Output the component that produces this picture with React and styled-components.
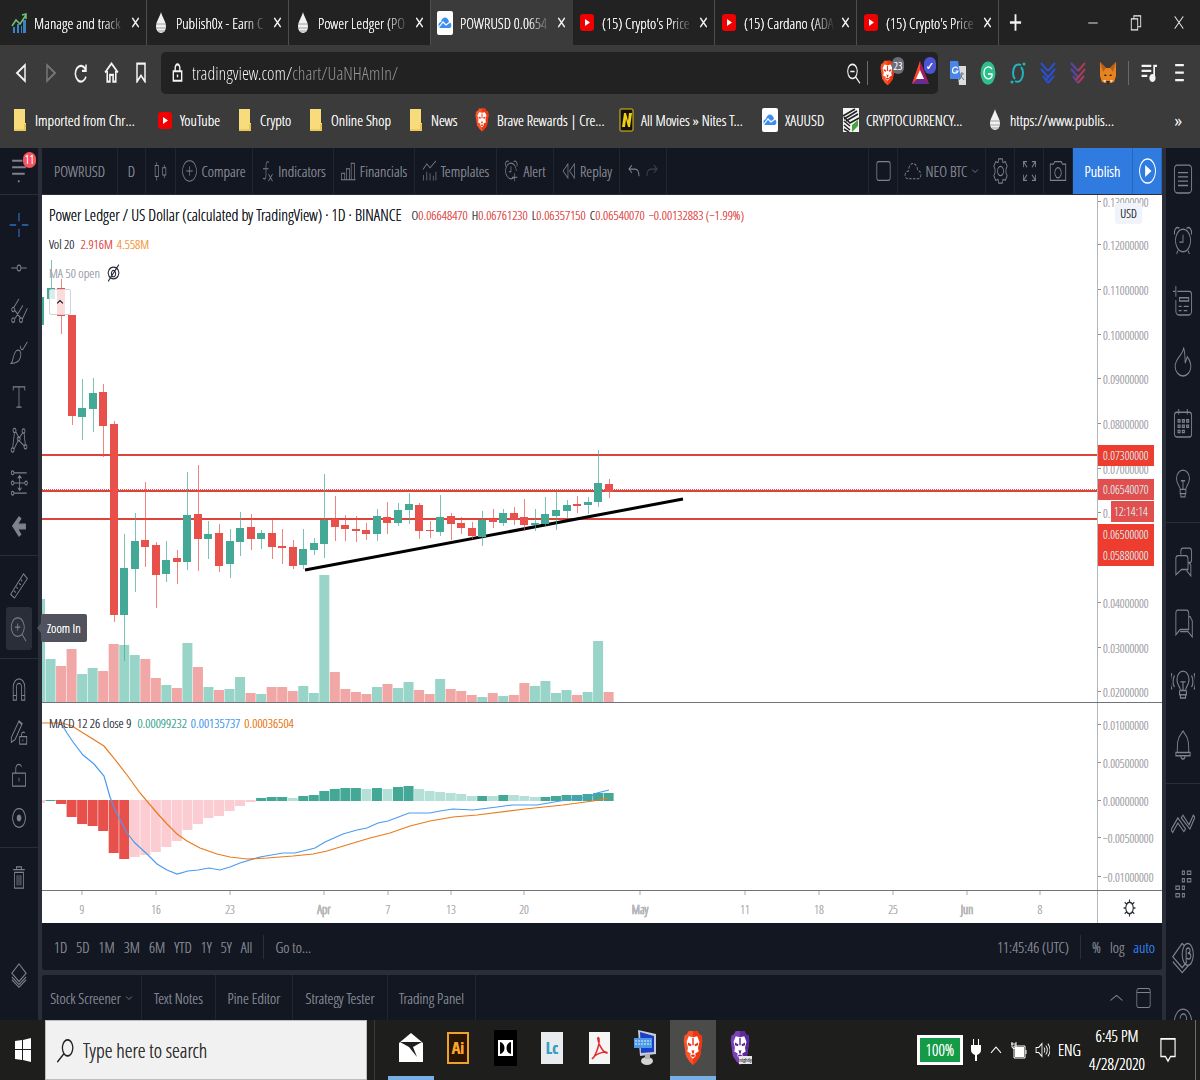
import React from 'react';
import styled, { createGlobalStyle } from 'styled-components';

const GlobalStyle = createGlobalStyle`
  * {
    box-sizing: border-box;
  }

  body {
    margin: 0;
    background: #131722;
  }

  body, button, input {
    font-family: 'Open Sans Condensed Light', 'Roboto Condensed', 'Liberation Sans Narrow', 'DejaVu Sans Condensed', 'Liberation Sans', sans-serif;
    text-shadow: 0 0 currentColor;
  }

  button {
    border: none;
    padding: 0;
    background: transparent;
    color: inherit;
    cursor: pointer;
  }

  a {
    color: inherit;
    text-decoration: none;
  }

  svg {
    display: block;
    flex: none;
  }
`;

{
  /* Icons */
}
const Glyph = ({ w = 18, h = 26, sw = 1.3, children }) => (
  <svg
    width={w}
    height={h}
    viewBox="0 0 28 28"
    preserveAspectRatio="none"
    fill="none"
    stroke="currentColor"
    strokeWidth={sw}
    aria-hidden="true"
  >
    {children}
  </svg>
);

const icons = {
  cross: <path d="M14 1v9M14 18v9M1 14h9M18 14h9" stroke="#2f6fc4" strokeWidth="1.6" />,
  hline: <path d="M2 14h9M17 14h9M14 11a3 3 0 1 0 0 6 3 3 0 0 0 0-6z" />,
  fork: (
    <path d="M6 10L14 1M7 13l10 9M8 22L20 8M19 23l8-12M5 10a2.400 2.400 0 1 0 .1 0zM5 21.500a2.400 2.400 0 1 0 .1 0zM17 21.500a2.400 2.400 0 1 0 .1 0z" />
  ),
  brush: <path d="M2 24c3-2 3-12 9-14 5-1 7 3 5 8-2 4-7 6-14 6zM16 5c0 3 2 5 4 4l7-8" />,
  text: <path d="M5 7V3h18v4M14 3v22M10 25h8" />,
  pattern: (
    <path d="M4 23L7 6M9 5l5 7 6-6M22 7l2 13M6 24l7-10 10 7M7 1.500a2.300 2.300 0 1 0 .1 0zM21 2a2.300 2.300 0 1 0 .1 0zM13.500 10.500a2.300 2.300 0 1 0 .1 0zM4 22.500a2.300 2.300 0 1 0 .1 0zM24 19a2.300 2.300 0 1 0 .1 0z" />
  ),
  forecast: (
    <path d="M6 3h20M6 25h20M6 14h17M15 6v16M12 9l3-3 3 3M12 19l3 3 3-3M4 1a2 2 0 1 0 .1 0zM4 12a2 2 0 1 0 .1 0zM25 12a2 2 0 1 0 .1 0zM4 23a2 2 0 1 0 .1 0z" />
  ),
  arrow: <path d="M4 14L14 4l3 2-5 6h12v5H12l5 6-3 2z" fill="currentColor" />,
  ruler: <path d="M1 23L21 1l6 5L7 27zM6 19l3 2M10 15l2 2M14 11l3 2M17 7l2 2" />,
  zoom: <path d="M12 2a10 10 0 1 0 .1 0zM12 8v8M8 12h8M19 20l6 7" />,
  magnet: <path d="M5 26V12a9 9 0 0 1 18 0v14h-5V12a4 4 0 0 0-8 0v14zM5 21h5M18 21h5" />,
  pencilLock: <path d="M2 20L14 2l5 3L8 22l-6 3zM14 3l4 3M15 19h11v8H15zM18 19v-3a3 3 0 0 1 5-1M20 22v2" />,
  lock: <path d="M4 12h20v14H4zM9 12V6a5 5 0 0 1 9-1M14 17v4" />,
  eye: (
    <g>
      <path d="M14 4a10 10 0 1 0 .1 0z" />
      <path d="M14 11a3 3 0 1 0 .1 0z" fill="currentColor" />
    </g>
  ),
  trash: <path d="M5 5h18M10 5V2h8v3M7 8h14v17H7zM11 11v11M14 11v11M17 11v11" />,
  layers: <path d="M14 1l10 10-10 9L4 11zM4 15l10 8 10-8M4 18l10 8 10-8" />,
  list: <path d="M6 1h16a4 4 0 0 1 4 4v18a4 4 0 0 1-4 4H6a4 4 0 0 1-4-4V5a4 4 0 0 1 4-4zM7 8h14M7 12h14M7 16h14M7 20h14" />,
  clock: <path d="M14 4a10.500 10.500 0 1 0 .1 0zM14 9v7H9M2 9c-1-5 3-8 7-6M26 9c1-5-3-8-7-6M7 24l-2 3M21 24l2 3" />,
  news: <path d="M4 0v10M0 5h3M6 5h17a3 3 0 0 1 3 3v15a4 4 0 0 1-4 4H8a4 4 0 0 1-4-4V13M9 11h13v3H9zM8 19h4M15 19h7M8 23h4M15 23h5" />,
  fire: <path d="M15 1C13 8 3 11 3 18c0 5 5 9 11 9s11-4 11-9c0-4-2-6-5-9l-3 6c0-6 0-9-2-14z" />,
  calendar: (
    <path d="M5 4h18a3 3 0 0 1 3 3v17a3 3 0 0 1-3 3H5a3 3 0 0 1-3-3V7a3 3 0 0 1 3-3zM8 1v5M20 1v5M7 11h3v2H7zM13 11h3v2h-3zM19 11h3v2h-3zM7 16h3v2H7zM13 16h3v2h-3zM19 16h3v2h-3zM7 21h3v2H7zM13 21h3v2h-3z" />
  ),
  bulb: <path d="M10 19c0-3-5-5-5-10a9 8 0 0 1 18 0c0 5-5 7-5 10zM10 19v4h8v-4M11 23v3h6v-3M11 11h6M14 11v8" />,
  chats: <path d="M7 8h11a3 3 0 0 1 3 3v10h-9l-8 5V11a3 3 0 0 1 3-3zM11 7V4a3 3 0 0 1 3-3h9a3 3 0 0 1 3 3v8c0 3-2 3-4 3M22 14l3 3v10l-6-5" />,
  chat: <path d="M6 2h13a3 3 0 0 1 3 3v15h-12l-6 5V5a3 3 0 0 1 2-3zM22 8h2l3 4v15l-6-5H10" />,
  bulbLive: (
    <path d="M11 20c0-3-4-5-4-10a7 8 0 0 1 14 0c0 5-4 7-4 10zM10 20v4h8v-4M11 24v3h6v-3M11 12h6M14 12v8M4 6c-2 4-2 8 0 11M1 4c-2 5-2 11 0 15M24 6c2 4 2 8 0 11M27 4c2 5 2 11 0 15" />
  ),
  bell: <path d="M4 21h20v3H4zM6 21c0-8 0-13 5-17l3-3 3 3c5 4 5 9 5 17M11 24a3 3 0 0 0 6 0" />,
  order: <path d="M0 22l8-14 9 13-2 3-7-10-6 11zM12 8l2-3 7 11 5-11 2 2-6 14z" />,
  dots: (
    <path d="M13 2h3v3h-3zM20 2h5v3h-5zM13 9h3v3h-3zM20 9h5v3h-5zM4 16h5v3H4zM13 16h3v3h-3zM4 23h5v3H4zM13 23h3v3h-3z" />
  ),
  beta: (
    <g>
      <path d="M13 2L1 13l12 9 6-5M1 17l12 9 8-6M13 2l3 2" />
      <path d="M20 2a7 9 0 1 0 .1 0zM18 17V8c0-3 5-3 5 0 0 2-3 2-3 2s4 0 4 2.500-4 3-5 1.500" />
    </g>
  ),
  help: <path d="M14 2a12 12 0 1 0 .1 0zM10 11c0-6 9-6 9 0 0 3-5 3-5 6" />,
  candles: <path d="M4 7h6v14H4zM7 3v4M7 21v5M18 10h6v9h-6zM21 6v4M21 19v4" />,
  compare: <path d="M14 1a13 13 0 1 0 .1 0zM14 8v12M8 14h12" />,
  fx: <path d="M18 3c-4-2-6 0-6 4v13c0 4-3 5-6 3M6 11h11M17 18l8 9M25 18l-8 9" />,
  bars: <path d="M1 25v-8h6v8zM10 25V11h6v14zM19 25V4h6v21zM0 25h27" />,
  template: <path d="M2 12l7-7 6 5 11-9M3 26v-7M9 26V15M15 26v-9M21 26v-6M26 26V15" />,
  alert: <path d="M19 22a10 10 0 1 1 4-8M13 8v7H9M3 8c-2-4 2-8 6-6M24 8c2-4-2-8-6-6M20 17v10M15 22h10" />,
  replay: <path d="M13 5L4 14l9 9zM25 5l-9 9 9 9z" />,
  undo: <path d="M10 5l-6 6 6 6M4 11h12c6 0 8 4 8 11" />,
  redo: <path d="M18 5l6 6-6 6M24 11H12c-6 0-8 4-8 11" />,
  square: <path d="M6 3h16a3 3 0 0 1 3 3v16a3 3 0 0 1-3 3H6a3 3 0 0 1-3-3V6a3 3 0 0 1 3-3z" />,
  cloud: <path d="M6 24c-6-1-6-9 1-10C7 2 20 1 21 13c7 1 7 10 1 11z" strokeDasharray="4 2" />,
  gear: (
    <path d="M14 9a5 5 0 1 0 .1 0zM11 1h6l1 4 4-1 3 5-2 3v4l2 3-3 5-4-1-1 4h-6l-1-4-4 1-3-5 2-3v-4L3 9l3-5 4 1z" />
  ),
  expand: <path d="M4 10V4h6M4 4l6 6M24 10V4h-6M24 4l-6 6M4 18v6h6M4 24l6-6M24 18v6h-6M24 24l-6-6" />,
  camera: <path d="M2 6h5l2-3h10l2 3h5v19H2zM14 10a5 6 0 1 0 .1 0z" />,
  play: (
    <g>
      <path d="M14 1a13 13 0 1 0 .1 0z" />
      <path d="M11 9l8 5-8 5z" fill="currentColor" />
    </g>
  ),
  chevronDown: <path d="M4 9l10 10L24 9" />,
  chevronUp: <path d="M4 19L14 9l10 10" />,
  panel: <path d="M6 2h16a3 3 0 0 1 3 3v18a3 3 0 0 1-3 3H6a3 3 0 0 1-3-3V5a3 3 0 0 1 3-3zM3 7h22" />,
  sun: <path d="M14 6a7 8 0 1 0 .1 0zM14 2v4M14 22v4M5 6l4 3M23 6l-4 3M5 22l4-3M23 22l-4-3M3 14h4M21 14h4" />,
  back: <path d="M22 3v22L6 14z" />,
  forward: <path d="M6 3v22l16-11z" />,
  reload: <path d="M23 9A11 11 0 1 0 24 19M24 2v9h-8" />,
  home: <path d="M2 14L14 2l12 12M6 12v14h5v-9h6v9h5V12" />,
  bookmark: <path d="M6 2h16v24l-8-8-8 8z" />,
  padlock: <path d="M5 12h18v14H5zM9 12V7a5 5 0 0 1 10 0v5M14 17v4" />,
  zoomOut: <path d="M12 3a9 9 0 1 0 .1 0zM8 12h8M18 19l8 8" />,
  close: <path d="M4 4l20 20M24 4L4 24" />,
  plus: <path d="M14 2v24M2 14h24" />,
  minimize: <path d="M3 14h22" />,
  restore: <path d="M3 8h15v18H3zM9 8V3h16v18h-7" />,
  playlist: (
    <g>
      <path d="M1 4h17M1 11h17M1 18h10M23 20V4h5" />
      <path d="M20 17a4 4 0 1 0 .1 0z" fill="currentColor" />
    </g>
  ),
  menu: <path d="M3 4h22M3 14h22M3 24h22" />,
  menuShort: <path d="M2 3h18M2 10h24M2 17h22M12 25h3" />,
  hidden: <path d="M14 5a10 9 0 1 0 .1 0zM14 10a4 5 0 1 0 .1 0zM24 1L4 27" />,
  search: <path d="M18 2a8 9 0 1 0 .1 0zM13 17L2 27" />,
  speaker: <path d="M2 10h5l6-6v20l-6-6H2zM17 10c2 3 2 5 0 8M20 7c4 4 4 10 0 14M24 4c5 6 5 14 0 20" />,
  note: <path d="M3 2h22v19h-7l-4 5-4-5H3z" />
};

const I = ({ name, ...rest }) => <Glyph {...rest}>{icons[name]}</Glyph>;

const Chart3 = () => (
  <svg width="16" height="22" viewBox="0 0 16 22">
    <path d="M2 15h2v6H2zM6 12h2v9H6zM10 14h1v7h-1zM12 8h3v13h-3z" fill="#3d83c4" />
    <path d="M1 14l4-6 4 4 6-9M11 3l4-1v5" fill="none" stroke="#6fc276" strokeWidth="1.500" />
  </svg>
);

const Drop = () => (
  <svg width="12" height="22" viewBox="0 0 12 22">
    <path d="M6 0c1 5 5 9 5 15a5 6 0 0 1-10 0C1 9 5 5 6 0z" fill="#f1f1f1" />
    <path d="M1 12h10M1 16h10M3 19h7" stroke="#9aa0a6" />
  </svg>
);

const Cloud = () => (
  <svg width="16" height="24" viewBox="0 0 16 24">
    <rect width="16" height="24" rx="2" fill="#fff" />
    <path d="M3 17c-3-2-1-6 1-6 1-6 7-6 8 0 3 1 3 5 1 6z" fill="#3d8ef0" />
    <path d="M2 16l4-5 3 3 4-3" fill="none" stroke="#fff" strokeWidth="1.200" />
  </svg>
);

const Tube = () => (
  <svg width="14" height="17" viewBox="0 0 14 17">
    <rect width="14" height="17" rx="3" fill="#f00000" />
    <path d="M5 5l5 3.500L5 12z" fill="#fff" />
  </svg>
);

const Folder = () => (
  <svg width="12" height="22" viewBox="0 0 12 22">
    <path d="M0 0h11v14h1v8H0z" fill="#f8dc7c" />
    <path d="M0 21h12" stroke="#e0b83e" />
    <path d="M10 15h2v6h-2z" fill="#e9c34e" />
  </svg>
);

const Lion = ({ w = 14, h = 24, from = '#fb542b', to = '#f0360f' }) => (
  <svg width={w} height={h} viewBox="0 0 28 40" preserveAspectRatio="none">
    <path d="M8 1h12l3 4 3 1 1 6-3 17-5 6-5 4-5-4-5-6L1 12l1-6 3-1z" fill={from} />
    <path d="M14 1h6l3 4 3 1 1 6-3 17-5 6-5 4z" fill={to} />
    <path
      d="M8 7l6 1 6-1 3 6-2 7 1 4-5 2 1 3-4 3-4-3 1-3-5-2 1-4-2-7z"
      fill="#fff"
    />
    <path d="M7 14l5 2-1 2-4-1zM21 14l-5 2 1 2 4-1zM12 22l2 1 2-1-1 4h-2zM10 29l4-2 4 2-4 1zM13 9h2v8h-2z" fill={to} />
  </svg>
);

const Nites = () => (
  <svg width="15" height="24" viewBox="0 0 15 24">
    <rect x="1" y="1" width="13" height="22" rx="1" fill="#111" stroke="#e8c40c" />
    <path d="M3 19L5 5h2l2 8 1-8h3l-2 14H9l-2-8-1 8z" fill="#f2cf10" />
  </svg>
);

const Coin = () => (
  <svg width="16" height="24" viewBox="0 0 16 24">
    <rect width="16" height="24" fill="#f4f4f4" />
    <path d="M0 8L12 1M1 11L14 3M3 13l12-7M1 9l6 6 9-5M1 13l6 5M1 17l6 5M1 21l5 3" fill="none" stroke="#222" strokeWidth="1.600" />
    <path d="M9 17l6-5v6l-6 6z" fill="#4aa043" />
  </svg>
);

const Bat = () => (
  <svg width="17" height="23" viewBox="0 0 17 23">
    <path d="M8 0l9 23H0z" fill="#662d91" />
    <path d="M8 0L0 23l8-8z" fill="#ff4724" />
    <path d="M8 0l9 23-9-8z" fill="#9e1f63" />
    <path d="M8 9l4 9H4z" fill="#fff" />
  </svg>
);

const Translate = () => (
  <svg width="16" height="24" viewBox="0 0 16 24">
    <path d="M7 5h9v19H9z" fill="#dcdcdc" />
    <path d="M9 13h5M12 11c0 4-1 6-3 8M10 14l4 5" stroke="#777" fill="none" />
    <path d="M0 0h8l3 18H0z" fill="#4a86e8" />
    <path d="M8 7.500C6 5 2.500 6 2.500 9.500S7 13 8 10H5.500" stroke="#fff" strokeWidth="1.200" fill="none" />
  </svg>
);

const Grammar = () => (
  <svg width="16" height="24" viewBox="0 0 16 24">
    <ellipse cx="8" cy="12" rx="7.500" ry="11.500" fill="#2fbf8d" />
    <path d="M12 8C9 4 4 6 4 12s6 8 8 3v-2H8" stroke="#fff" strokeWidth="1.300" fill="none" />
  </svg>
);

const Icx = () => (
  <svg width="16" height="24" viewBox="0 0 16 24">
    <path d="M11 4C6 2 3 6 3 12c0 3 1 5 2 6M5 20c5 3 8-3 8-8 0-3-1-5-2-6" stroke="#22b5bb" strokeWidth="2" fill="none" />
    <circle cx="2" cy="21" r="1.500" fill="#22b5bb" />
    <circle cx="14" cy="3" r="1.500" fill="#22b5bb" />
  </svg>
);

const Stripes = ({ color, color2 }) => (
  <svg width="16" height="22" viewBox="0 0 16 22">
    <path d="M1 1l7 8M1 7l7 8M3 14l5 7" stroke={color} strokeWidth="2" />
    <path d="M15 1L8 9M15 7l-9 11M14 14l-6 7" stroke={color2} strokeWidth="2" />
  </svg>
);

const Fox = () => (
  <svg width="16" height="24" viewBox="0 0 16 24">
    <path d="M0 1l6 6h4l6-6v14l-2 6-4 1H6l-4-1-2-6z" fill="#e8821e" />
    <path d="M0 1l6 6-3 4zM16 1l-6 6 3 4z" fill="#b8611a" />
    <path d="M5 13l2 2H4zM11 13l-2 2h3zM6 20h4l-1 3H7z" fill="#2a2a2a" />
    <path d="M3 19h3l-1 3zM13 19h-3l1 3z" fill="#f2d9b8" />
  </svg>
);

const WinLogo = () => (
  <svg width="16" height="24" viewBox="0 0 16 24">
    <path d="M0 3l7-1v9H0zM8 2l8-2v11H8zM0 12h7v10l-7-1zM8 12h8v12l-8-2z" fill="#fff" />
  </svg>
);

const Mail = () => (
  <svg width="24" height="30" viewBox="0 0 24 30">
    <path d="M0 10L12 0l12 10v19H0z" fill="#fff" />
    <path d="M1 9h22l-9 5 4 10-8-10z" fill="#1e1e1c" />
  </svg>
);

const Dolby = () => (
  <svg width="23" height="36" viewBox="0 0 23 36">
    <rect width="23" height="36" fill="#000" />
    <path d="M4 10h15v16H4z" fill="#fff" />
    <path d="M6 12c6 1 6 11 0 12zM17 12c-6 1-6 11 0 12z" fill="#000" />
  </svg>
);

const Acrobat = () => (
  <svg width="21" height="32" viewBox="0 0 21 32">
    <rect width="21" height="32" fill="#f5f5f5" />
    <path d="M3 27c3-2 8-14 7-20 0-2-2-2-1 1 1 6 6 13 9 13 1-2-10-1-15 6z" stroke="#df2b2b" strokeWidth="1.500" fill="none" />
  </svg>
);

const Monitor = () => (
  <svg width="24" height="36" viewBox="0 0 24 36">
    <path d="M4 0l18 4v20L6 26z" fill="#c8ccd6" />
    <path d="M6 2l14 4v16L7 23z" fill="#1c3fc9" />
    <path d="M0 8h18v10H0z" fill="#4d9be6" />
    <path d="M1 11h16M1 14h16" stroke="#e4f0ff" strokeDasharray="2 1" />
    <ellipse cx="13" cy="31" rx="6" ry="4" fill="#d5d5d5" />
    <path d="M11 24h5v5h-5z" fill="#b5b5b5" />
  </svg>
);

const Plug = () => (
  <svg width="10" height="22" viewBox="0 0 10 22">
    <path d="M2 0h1v6h4V0h1v6h2v5c0 3-2 4-4 5v6H4v-6c-2-1-4-2-4-5V6h2z" fill="#fff" />
  </svg>
);

const Power = () => (
  <svg width="16" height="17" viewBox="0 0 16 17">
    <path d="M4 5h9v10H4z" fill="#fff" />
    <path d="M3 4h11v12H3zM15 8v4M0 2h5M1 0v5c0 2 4 2 4 0V0" fill="none" stroke="#fff" />
  </svg>
);

{
  /* Browser frame */
}
const Page = styled.div`
  display: flex;
  flex-direction: column;
  min-height: 100vh;
`;

const TabStrip = styled.div`
  display: flex;
  align-items: stretch;
  height: 45px;
  padding-left: 5px;
  background: #222222;
  color: #f2f2f2;
`;

const Tab = styled.div`
  display: flex;
  align-items: center;
  flex: 0 1 142px;
  min-width: 0;
  padding: 0 6px 0 5px;
  border-right: 1px solid ${props => (props.$active ? '#3b3b3b' : '#4e4e4e')};
  background: ${props => (props.$active ? '#3b3b3b' : 'transparent')};
`;

const TabLink = styled.a`
  display: flex;
  align-items: center;
  gap: 6px;
  flex: 1;
  min-width: 0;
`;

const Favicon = styled.span`
  display: flex;
  justify-content: center;
  width: 18px;
  flex: none;
`;

const TabTitle = styled.span`
  flex: 1;
  min-width: 0;
  overflow: hidden;
  white-space: nowrap;
  font-size: 15px;
  line-height: 24px;
  mask-image: linear-gradient(90deg, #000 75%, transparent 100%);
`;

const TabClose = styled.button`
  margin-left: 6px;
`;

const NewTab = styled.button`
  width: 32px;
  display: flex;
  align-items: center;
  justify-content: center;
`;

const WindowButtons = styled.div`
  display: flex;
  align-items: center;
  margin-left: auto;

  button {
    width: 43px;
    display: flex;
    justify-content: center;
  }
`;

const NavRow = styled.div`
  display: flex;
  align-items: center;
  height: 55px;
  padding: 0 6px;
  background: #3b3b3b;
  color: #f4f4f4;
`;

const NavButton = styled.button`
  width: 30px;
  display: flex;
  justify-content: center;
  color: ${props => (props.$dim ? '#777777' : '#f4f4f4')};
`;

const AddressBar = styled.div`
  display: flex;
  align-items: center;
  flex: 1;
  height: 42px;
  margin-left: 5px;
  padding: 0 0 0 10px;
  border-radius: 5px;
  background: #222222;
`;

const AddressInput = styled.input`
  flex: 1;
  min-width: 0;
  margin-left: 8px;
  padding: 0;
  border: none;
  outline: none;
  font-size: 18px;
  line-height: 24px;
  color: transparent;
  background: linear-gradient(90deg, #ffffff ${props => props.$host}px, #9a9a9a ${props => props.$host}px);
  background-clip: text;
  -webkit-background-clip: text;
`;

const Divider = styled.span`
  width: 1px;
  height: ${props => props.$h || 24}px;
  margin: 0 ${props => props.$m}px;
  background: ${props => props.$color || '#6a6a6a'};
`;

const BadgeButton = styled.button`
  position: relative;
  width: 32px;
  height: 32px;
  display: flex;
  align-items: center;
  padding-left: 6px;
`;

const Badge = styled.span`
  position: absolute;
  top: 0;
  right: 2px;
  width: 12px;
  height: 17px;
  border-radius: 6px;
  background: ${props => props.$color};
  color: #ffffff;
  font-size: 11px;
  line-height: 17px;
  text-align: center;
`;

const Extensions = styled.div`
  display: flex;
  align-items: center;
  margin-left: 5px;

  button {
    width: 30px;
    display: flex;
    justify-content: center;
  }
`;

const Bookmarks = styled.nav`
  display: flex;
  align-items: center;
  height: 48px;
  padding: 0 18px 8px 11px;
  background: #3b3b3b;
  color: #f4f4f4;
  font-size: 15px;
  line-height: 24px;
  white-space: nowrap;
`;

const BookmarkLink = styled.a`
  display: flex;
  align-items: center;
  gap: 6px;
  flex: 0 0 ${props => props.$w}px;
`;

const MoreButton = styled.button`
  margin-left: auto;
  font-size: 18px;
`;

{
  /* Chart application */
}
const Workspace = styled.div`
  display: flex;
  flex: 1;
  gap: 4px;
  background: #2a2e39;
  color: #7f828d;
`;

const SideBar = styled.aside`
  display: flex;
  flex-direction: column;
  flex: 0 0 ${props => props.$w}px;
  background: #131722;
`;

const MenuButton = styled.button`
  position: relative;
  display: flex;
  align-items: center;
  justify-content: center;
  height: 47px;
  border-bottom: 1px solid #2a2e39;
`;

const Notice = styled.span`
  position: absolute;
  top: 4px;
  right: 2px;
  width: 13px;
  height: 16px;
  border-radius: 7px;
  background: #f7525f;
  color: #ffffff;
  font-size: 12px;
  line-height: 16px;
`;

const ToolGroup = styled.div`
  display: flex;
  flex-direction: column;
  padding: ${props => (props.$first ? 0 : 8)}px 0 8px;
  border-bottom: ${props => (props.$last ? 'none' : '1px solid #2a2e39')};
`;

const ToolButton = styled.button`
  position: relative;
  display: flex;
  align-items: center;
  justify-content: center;
  flex: 0 0 ${props => props.$h || 43}px;
  margin: 0 6px;
  border-radius: 3px;
  background: ${props => (props.$active ? '#2a2e39' : 'transparent')};
`;

const Spacer = styled.div`
  flex: ${props => (props.$h ? `0 0 ${props.$h}px` : 1)};
`;

const Tooltip = styled.span`
  position: absolute;
  left: 35px;
  top: 7px;
  z-index: 3;
  padding: 0 6px;
  border-radius: 2px;
  background: #50535e;
  color: #ffffff;
  font-size: 13px;
  line-height: 28px;
  white-space: nowrap;

  &:before {
    content: '';
    position: absolute;
    left: -4px;
    top: 9px;
    border-style: solid;
    border-width: 5px 4px 5px 0;
    border-color: transparent #50535e;
  }
`;

const RightBar = styled(SideBar)`
  contain: size;
  overflow: hidden;

  ${ToolButton} {
    margin: 0;
  }
`;

const Center = styled.main`
  display: flex;
  flex-direction: column;
  flex: 1;
  min-width: 0;
`;

const Toolbar = styled.div`
  display: flex;
  height: 47px;
  background: #131722;
  border-bottom: 1px solid #2a2e39;
`;

const BarButton = styled.button`
  display: flex;
  align-items: center;
  justify-content: center;
  gap: 4px;
  flex: 0 0 ${props => props.$w}px;
  border-right: 1px solid #22262f;
  border-left: ${props => (props.$first ? '1px solid #22262f' : 'none')};
  font-size: 15px;
  white-space: nowrap;
`;

const Publish = styled(BarButton)`
  background: #2f7be0;
  color: #ffffff;
  border-right: 1px solid #2566bf;
`;

const Dim = styled.span`
  opacity: 0.4;
`;

const ChartGrid = styled.section`
  position: relative;
  display: grid;
  grid-template-columns: 1fr 65px;
  flex: 1;
  background: #ffffff;
`;

const Legend = styled.div`
  position: absolute;
  left: 7px;
  top: 7px;
  display: flex;
  flex-direction: column;
  align-items: flex-start;
  gap: 4px;
  color: #2a2e39;
`;

const LegendRow = styled.div`
  display: flex;
  align-items: center;
  gap: 6px;
  height: 25px;
  font-size: 13px;
  white-space: nowrap;
  color: ${props => (props.$muted ? '#a3a6af' : '#3a3e49')};
`;

const Symbol = styled.span`
  margin-right: 4px;
  font-size: 16px;
  color: #131722;
`;

const Value = styled.span`
  color: ${props => props.$color};
`;

const Values = styled.span`
  display: flex;
  gap: 4px;
`;

const Collapse = styled.button`
  display: flex;
  align-items: center;
  justify-content: center;
  width: 22px;
  height: 26px;
  border: 1px solid #d0d3da;
  border-radius: 2px;
  background: rgba(255, 255, 255, 0.8);
  color: #131722;
`;

const MacdLegend = styled(LegendRow)`
  position: absolute;
  left: 7px;
  top: 515px;
`;

const Currency = styled.button`
  position: absolute;
  right: 20px;
  top: 8px;
  width: 27px;
  border-radius: 3px;
  background: #f0f3fa;
  color: #2a2e39;
  font-size: 12px;
  line-height: 21px;
`;

const AxisSettings = styled.button`
  position: absolute;
  right: 25px;
  bottom: 5px;
  color: #2a2e39;
`;

const RangeBar = styled.div`
  display: flex;
  align-items: center;
  gap: 9px;
  height: 47px;
  padding: 0 7px 0 12px;
  background: #131722;
  border-radius: 0 0 3px 3px;
  font-size: 15px;

  button {
    font-size: 15px;
  }
`;

const Push = styled.span`
  margin-left: auto;
`;

const Auto = styled.button`
  color: #2f7be0;
`;

const WidgetBar = styled.div`
  display: flex;
  height: 45px;
  margin-top: 5px;
  background: #131722;
  border-radius: 3px 3px 0 0;
`;

const WidgetTools = styled.div`
  display: flex;
  align-items: center;
  gap: 10px;
  margin-left: auto;
  padding-right: 10px;
`;

{
  /* Windows taskbar */
}
const Taskbar = styled.footer`
  display: flex;
  height: 60px;
  background: #1e1e1c;
  color: #ffffff;
`;

const StartButton = styled.button`
  width: 45px;
  display: flex;
  align-items: center;
  justify-content: center;
`;

const SearchBox = styled.label`
  display: flex;
  align-items: center;
  gap: 7px;
  flex: 0 1 322px;
  padding: 0 10px;
  background: #f1f1f1;
  border: 1px solid #bdbdbd;
  color: #222222;
`;

const SearchInput = styled.input`
  flex: 1;
  min-width: 0;
  border: none;
  outline: none;
  background: transparent;
  font-size: 20px;

  &::placeholder {
    color: #333333;
    opacity: 1;
  }
`;

const Apps = styled.div`
  display: flex;
  align-items: stretch;
  margin-left: 7px;
  padding-left: 13px;
  gap: 1px;
  border-left: 1px solid #3a3a38;
`;

const AppButton = styled.button`
  display: flex;
  align-items: center;
  justify-content: center;
  width: 46px;
  border-bottom: 4px solid ${props => (props.$open ? '#76b0e6' : 'transparent')};
  background: ${props => (props.$active ? '#4b4b4a' : 'transparent')};
`;

const AppTile = styled.span`
  width: 22px;
  height: 32px;
  border: 2px solid ${props => props.$edge};
  background: ${props => props.$bg};
  color: ${props => props.$color};
  font-family: 'Open Sans Condensed', 'Roboto Condensed', sans-serif;
  font-size: 16px;
  font-weight: bold;
  line-height: 28px;
  text-align: center;
`;

const Nightly = styled.span`
  position: relative;
`;

const NightlyTag = styled.span`
  position: absolute;
  right: -2px;
  bottom: 2px;
  background: #e6e6e6;
  color: #222222;
  font-size: 6px;
  line-height: 8px;
`;

const Tray = styled.div`
  display: flex;
  align-items: center;
  gap: 8px;
  margin-left: auto;
  padding-right: 4px;
  font-size: 16px;
`;

const Battery = styled.span`
  width: 46px;
  border: 3px solid #ffffff;
  background: #159a48;
  line-height: 24px;
  text-align: center;
`;

const Clock = styled.time`
  width: 56px;
  text-align: center;
  line-height: 28px;
`;

const ActionButton = styled.button`
  padding: 0 18px 0 6px;
  border-right: 1px solid #6d6d6d;
  height: 60px;
`;

{
  /* high, body top, body bottom, low, rising, volume */
}
const candles = [
  [102, 102, 130, 130, 1, 103], [65, 93, 104, 104, 1, 43], [84, 93, 121, 139, 0, 36], [120, 120, 221, 230, 0, 53],
  [184, 213, 222, 245, 1, 28], [183, 198, 214, 237, 1, 34], [189, 197, 231, 262, 0, 31], [226, 229, 420, 427, 0, 58],
  [339, 373, 420, 466, 1, 57], [318, 346, 374, 397, 1, 47], [287, 345, 352, 372, 0, 43], [347, 350, 380, 413, 0, 24],
  [346, 365, 379, 387, 1, 17], [355, 363, 367, 389, 0, 14], [277, 320, 367, 375, 1, 59], [270, 319, 344, 376, 0, 35],
  [326, 339, 344, 364, 1, 15], [329, 338, 371, 377, 0, 12], [334, 346, 369, 383, 1, 13], [317, 333, 347, 361, 1, 25],
  [319, 332, 344, 355, 0, 9], [335, 338, 344, 354, 1, 8], [324, 338, 352, 364, 0, 15], [334, 351, 353, 369, 0, 15],
  [345, 352, 371, 374, 0, 11], [334, 354, 370, 374, 1, 16], [343, 348, 355, 360, 1, 9], [279, 325, 349, 363, 1, 127],
  [301, 324, 332, 346, 0, 30], [320, 330, 334, 346, 0, 13], [321, 334, 336, 347, 0, 10], [328, 335, 339, 345, 0, 8],
  [314, 321, 339, 346, 1, 15], [307, 322, 328, 339, 0, 18], [308, 315, 328, 331, 1, 14], [298, 309, 315, 329, 1, 20],
  [308, 310, 336, 344, 0, 12], [326, 335, 336, 343, 0, 8], [300, 322, 337, 341, 1, 23], [318, 321, 329, 345, 0, 13],
  [322, 328, 333, 339, 0, 11], [327, 333, 341, 344, 0, 7], [316, 325, 342, 351, 1, 5], [314, 324, 327, 333, 0, 9],
  [314, 318, 328, 331, 1, 6], [312, 318, 325, 330, 0, 7], [304, 322, 330, 336, 0, 19], [314, 328, 330, 336, 1, 16],
  [302, 319, 329, 332, 1, 21], [297, 315, 321, 335, 1, 9], [305, 310, 316, 323, 1, 12], [301, 309, 311, 318, 0, 7],
  [302, 307, 310, 319, 1, 10], [255, 288, 307, 312, 1, 61], [284, 289, 297, 303, 0, 10]
];

const histogram = [
  -3, 1, -4, -17, -24, -26, -31, -53, -59, -57, -55, -52, -47, -41, -30, -24, -18, -16, -11, -6, -2,
  3, 4, 4, 3, 5, 6, 10, 12, 13, 13, 12, 13, 12, 14, 15, 12, 10, 9, 8, 7, 5, 5, 5, 6, 6, 5, 4, 4, 5, 6, 6, 7, 8, 8
];
const fading = [0, 24, 31, 33, 36, 37, 38, 39, 40, 41, 43, 45, 46, 47];

const signalLine =
  '0,528 20,528 30,531 46,541 62,551 71,562 85,580 98,598 115,618 125,629 135,639 145,646 158,653 175,659 188,662 205,664 225,663 251,661 271,659 285,656 308,649 328,643 348,638 368,631 388,626 411,622 435,620 483,614 521,610 551,606 567,603';
const macdLine =
  '20,530 25,538 31,547 41,560 52,569 62,581 68,602 73,615 85,638 93,648 105,659 115,669 125,675 135,679 146,676 156,675 167,673 178,675 188,672 198,668 218,662 241,658 253,658 261,656 273,653 283,647 301,639 315,635 325,633 336,628 346,626 367,618 388,618 398,616 411,614 431,615 455,612 470,610 495,610 518,606 531,604 548,602 555,598 567,595';

const dates = [
  ['9', 40], ['16', 114], ['23', 188], ['Apr', 282], ['7', 346], ['13', 409], ['20', 482], ['May', 598],
  ['11', 703], ['18', 777], ['25', 851], ['Jun', 925], ['8', 998]
];

const prices = [
  ['0.13000000', 7], ['0.12000000', 50], ['0.11000000', 95], ['0.10000000', 140], ['0.09000000', 184],
  ['0.08000000', 229], ['0.07000000', 274], ['0.', 318], ['0.04000000', 408], ['0.03000000', 453],
  ['0.02000000', 497], ['0.01000000', 530], ['0.00500000', 568], ['0.00000000', 606], ['−0.00500000', 643],
  ['−0.01000000', 682]
];

const tags = [
  ['0.07300000', 250, 1, 56, '#ee3d2f'],
  ['0.06540070', 284, 1, 56, '#e1504f'],
  ['12:14:14', 306, 14, 43, '#e1504f'],
  ['0.06500000', 329, 1, 56, '#ee3d2f'],
  ['0.05880000', 350, 1, 56, '#ee3d2f']
];

const STEP = 10.53;
const VOLUME_BASE = 507;
const ZERO = 605;
const barX = i => i * STEP - 2;

const histColor = i => {
  if (histogram[i] > 0) return fading.includes(i) ? '#b4e0d7' : '#43a895';
  return i > 8 || fading.includes(i) ? '#fbcdd2' : '#e8504c';
};

function Plot() {
  return (
    <svg width="100%" height="728" role="img" aria-label="POWRUSD chart">
      {[260, 296, 324].map(y => (
        <line key={y} x1="0" x2="100%" y1={y} y2={y} stroke="#dd4338" strokeWidth="2" />
      ))}
      <line x1="0" x2="100%" y1="294.500" y2="294.500" stroke="#e1504f" strokeDasharray="1 1" />
      <line x1="263" y1="375" x2="641" y2="304" stroke="#000000" strokeWidth="3" />
      {candles.map(([high, top, bottom, low, up, volume], i) => (
        <g key={i} fill={up ? '#43a895' : '#e8504c'}>
          <rect x={barX(i) - 5} y={VOLUME_BASE - volume} width="10" height={volume} fill={up ? '#99d4c8' : '#f2a7a7'} />
          <rect x={Math.round(barX(i))} y={high} width="1" height={low - high} opacity="0.7" />
          <rect x={Math.round(barX(i)) - 4} y={top} width="8" height={bottom - top} />
        </g>
      ))}
      {histogram.map((v, i) => (
        <rect
          key={i}
          x={barX(i) - 5}
          y={v > 0 ? ZERO + 1 - v : ZERO}
          width="10"
          height={Math.abs(v)}
          fill={histColor(i)}
        />
      ))}
      <polyline points={macdLine} fill="none" stroke="#4a9bf0" strokeWidth="1.200" />
      <polyline points={signalLine} fill="none" stroke="#ea7a1a" strokeWidth="1.200" />
      <path d="M0 507.500h4000M0 695.500h4000" stroke="#707378" />
      {dates.map(([label, x]) => (
        <g key={label}>
          <path d={`M${x} 696v4`} stroke="#a5a7ad" />
          <text
            x={x}
            y="719"
            fill="#bcbcbc"
            fontSize="12"
            textAnchor="middle"
            fontWeight={label.length > 2 ? 'bold' : 'normal'}
          >
            {label}
          </text>
        </g>
      ))}
    </svg>
  );
}

function PriceAxis() {
  return (
    <svg width="65" height="728" role="img" aria-label="Price scale">
      <path d="M.5 0v728" stroke="#b4b6bb" />
      <path d="M0 507.500h65M0 695.500h65" stroke="#707378" />
      {prices.map(([label, y]) => (
        <g key={label}>
          <path d={`M1 ${y - 0.5}h3`} stroke="#8d9098" />
          <text x="6" y={y + 5} fill="#b4b4b4" fontSize="12">
            {label}
          </text>
        </g>
      ))}
      {tags.map(([label, y, x, w, color]) => (
        <g key={label}>
          <rect x={x} y={y} width={w} height="21" fill={color} />
          <text x={x > 1 ? 17 : 6} y={y + 15} fill="#ffffff" fontSize="12">
            {label}
          </text>
        </g>
      ))}
    </svg>
  );
}

const tabs = [
  ['Manage and track', <Chart3 />],
  ['Publish0x - Earn C', <Drop />],
  ['Power Ledger (PO', <Drop />],
  ['POWRUSD 0.0654', <Cloud />, true],
  ["(15) Crypto's Price", <Tube />],
  ['(15) Cardano (ADA', <Tube />],
  ["(15) Crypto's Price", <Tube />]
];

const bookmarks = [
  ['Imported from Chr...', 145, <Folder />],
  ['YouTube', 80, <Tube />],
  ['Crypto', 71, <Folder />],
  ['Online Shop', 100, <Folder />],
  ['News', 66, <Folder />],
  ['Brave Rewards | Cre...', 144, <Lion />],
  ['All Movies » Nites T...', 144, <Nites />],
  ['XAUUSD', 81, <Cloud />],
  ['CRYPTOCURRENCY...', 144, <Coin />],
  ['https://www.publis...', 130, <Drop />]
];

function Browser() {
  return (
    <header>
      <TabStrip>
        {tabs.map(([title, icon, active], i) => (
          <Tab key={i} $active={active}>
            <TabLink href="#">
              <Favicon>{icon}</Favicon>
              <TabTitle>{title}</TabTitle>
            </TabLink>
            <TabClose aria-label="Close tab">
              <I name="close" w={9} h={13} sw={4} />
            </TabClose>
          </Tab>
        ))}
        <NewTab aria-label="New tab">
          <I name="plus" w={13} h={19} sw={4} />
        </NewTab>
        <WindowButtons>
          <button aria-label="Minimize"><I name="minimize" w={12} h={14} sw={2} /></button>
          <button aria-label="Restore"><I name="restore" w={12} h={17} sw={2} /></button>
          <button aria-label="Close"><I name="close" w={12} h={17} sw={2} /></button>
        </WindowButtons>
      </TabStrip>
      <NavRow>
        <NavButton aria-label="Back"><I name="back" w={14} h={20} sw={3} /></NavButton>
        <NavButton aria-label="Forward" $dim><I name="forward" w={14} h={20} sw={3} /></NavButton>
        <NavButton aria-label="Reload"><I name="reload" w={14} h={20} sw={3} /></NavButton>
        <NavButton aria-label="Home"><I name="home" w={15} h={21} sw={3} /></NavButton>
        <NavButton aria-label="Bookmark"><I name="bookmark" w={14} h={21} sw={3} /></NavButton>
        <AddressBar>
          <I name="padlock" w={13} h={19} sw={3} />
          <AddressInput aria-label="Address" defaultValue="tradingview.com/chart/UaNHAmIn/" $host={100} />
          <I name="zoomOut" w={15} h={22} sw={2} />
          <Divider $m={6} />
          <BadgeButton aria-label="Brave Shields">
            <Lion w={15} h={26} />
            <Badge $color="#6b6e78">23</Badge>
          </BadgeButton>
          <BadgeButton aria-label="Brave Rewards">
            <Bat />
            <Badge $color="#4c54d2">✓</Badge>
          </BadgeButton>
        </AddressBar>
        <Extensions>
          <button aria-label="Translate"><Translate /></button>
          <button aria-label="Grammar"><Grammar /></button>
          <button aria-label="Wallet"><Icx /></button>
          <button aria-label="Extension"><Stripes color="#2c4fd0" color2="#2c4fd0" /></button>
          <button aria-label="Extension"><Stripes color="#5b45a8" color2="#a83c5c" /></button>
          <button aria-label="MetaMask"><Fox /></button>
          <Divider $m={5} />
          <button aria-label="Playlist"><I name="playlist" w={16} h={20} sw={3} /></button>
          <button aria-label="Menu"><I name="menu" w={11} h={21} sw={3} /></button>
        </Extensions>
      </NavRow>
      <Bookmarks>
        {bookmarks.map(([label, w, icon]) => (
          <BookmarkLink key={label} href="#" $w={w}>
            <Favicon>{icon}</Favicon>
            {label}
          </BookmarkLink>
        ))}
        <MoreButton aria-label="More bookmarks">»</MoreButton>
      </Bookmarks>
    </header>
  );
}

const drawTools = [
  ['cross', 'hline', 'fork', 'brush', 'text', 'pattern', 'forecast', 'arrow'],
  ['ruler', 'zoom'],
  ['magnet', 'pencilLock', 'lock', 'eye'],
  ['trash']
];

const panels = [
  ['list', 'clock', 'news', 'fire', 'calendar', 'bulb'],
  ['chats', 'chat', 'bulbLive', 'bell'],
  ['order', 'dots']
];

const barItems = [
  ['POWRUSD', 76],
  ['D', 28],
  ['', 30, 'candles'],
  ['Compare', 77, 'compare'],
  ['Indicators', 81, 'fx'],
  ['Financials', 81, 'bars'],
  ['Templates', 82, 'template'],
  ['Alert', 57, 'alert'],
  ['Replay', 66, 'replay']
];

function ChartApp() {
  return (
    <Workspace>
      <SideBar $w={38}>
        <MenuButton aria-label="Menu">
          <I name="menuShort" w={16} h={26} sw={2.2} />
          <Notice>11</Notice>
        </MenuButton>
        {drawTools.map((group, i) => (
          <ToolGroup key={i} $last={i === 3}>
            {group.map(name => (
              <ToolButton key={name} aria-label={name} $active={name === 'zoom'}>
                <I name={name} w={name === 'cross' ? 20 : 18} />
                {name === 'zoom' && <Tooltip>Zoom In</Tooltip>}
              </ToolButton>
            ))}
          </ToolGroup>
        ))}
        <Spacer />
        <ToolButton aria-label="Object tree"><I name="layers" w={20} /></ToolButton>
        <Spacer $h={23} />
      </SideBar>

      <Center>
        <Toolbar>
          {barItems.map(([label, w, icon]) => (
            <BarButton key={w + label} $w={w} aria-label={label || 'Candles'}>
              {icon && <I name={icon} w={icon === 'fx' ? 14 : 15} h={22} />}
              {label}
            </BarButton>
          ))}
          <BarButton $w={47} aria-label="Undo and redo">
            <I name="undo" w={14} h={18} sw={1.8} />
            <Dim><I name="redo" w={14} h={18} sw={1.8} /></Dim>
          </BarButton>
          <Spacer />
          <BarButton $w={30} $first aria-label="Layout"><I name="square" w={17} h={24} /></BarButton>
          <BarButton $w={88}>
            <I name="cloud" w={18} h={22} />
            NEO BTC
            <I name="chevronDown" w={8} h={8} sw={3} />
          </BarButton>
          <BarButton $w={29} aria-label="Settings"><I name="gear" w={17} h={26} /></BarButton>
          <BarButton $w={29} aria-label="Fullscreen"><I name="expand" w={17} h={26} /></BarButton>
          <BarButton $w={29} aria-label="Snapshot"><I name="camera" w={18} h={24} /></BarButton>
          <Publish $w={60}>Publish</Publish>
          <Publish $w={29} aria-label="Play"><I name="play" w={17} h={26} sw={1.6} /></Publish>
        </Toolbar>

        <ChartGrid>
          <Plot />
          <PriceAxis />
          <Legend>
            <LegendRow>
              <Symbol>Power Ledger / US Dollar (calculated by TradingView) · 1D · BINANCE</Symbol>
              <Values>
                <span>O<Value $color="#e1504f">0.06648470</Value></span>
                <span>H<Value $color="#e1504f">0.06761230</Value></span>
                <span>L<Value $color="#e1504f">0.06357150</Value></span>
                <span>C<Value $color="#e1504f">0.06540070</Value></span>
                <Value $color="#e1504f">−0.00132883 (−1.99%)</Value>
              </Values>
            </LegendRow>
            <LegendRow>
              Vol 20
              <Values>
                <Value $color="#e1504f">2.916M</Value>
                <Value $color="#f59a45">4.558M</Value>
              </Values>
            </LegendRow>
            <LegendRow $muted>
              MA 50 open
              <Value $color="#2a2e39"><I name="hidden" w={15} h={18} sw={2} /></Value>
            </LegendRow>
            <Collapse aria-label="Collapse legend"><I name="chevronUp" w={8} h={8} sw={4} /></Collapse>
          </Legend>
          <MacdLegend>
            MACD 12 26 close 9
            <Values>
              <Value $color="#43a895">0.00099232</Value>
              <Value $color="#4a9bf0">0.00135737</Value>
              <Value $color="#ea7a1a">0.00036504</Value>
            </Values>
          </MacdLegend>
          <Currency>USD</Currency>
          <AxisSettings aria-label="Scale settings"><I name="sun" w={15} h={20} sw={2} /></AxisSettings>
        </ChartGrid>

        <RangeBar>
          {['1D', '5D', '1M', '3M', '6M', 'YTD', '1Y', '5Y', 'All'].map(r => (
            <button key={r}>{r}</button>
          ))}
          <Divider $color="#2a2e39" $m={2} />
          <button>Go to...</button>
          <Push>11:45:46 (UTC)</Push>
          <Divider $color="#2a2e39" $m={2} />
          <button>%</button>
          <button>log</button>
          <Auto>auto</Auto>
        </RangeBar>
        <WidgetBar>
          <BarButton $w={100}>
            Stock Screener
            <I name="chevronDown" w={8} h={8} sw={3} />
          </BarButton>
          <BarButton $w={74}>Text Notes</BarButton>
          <BarButton $w={77}>Pine Editor</BarButton>
          <BarButton $w={95}>Strategy Tester</BarButton>
          <BarButton $w={88}>Trading Panel</BarButton>
          <WidgetTools>
            <button aria-label="Open panel"><I name="chevronUp" w={17} h={14} sw={2} /></button>
            <button aria-label="Maximize panel"><I name="panel" w={17} h={22} /></button>
          </WidgetTools>
        </WidgetBar>
      </Center>

      <RightBar $w={34}>
        {panels.map((group, i) => (
          <ToolGroup key={i} $first={i === 0} $last={i === 2}>
            {group.map(name => (
              <ToolButton key={name} aria-label={name} $h={61}>
                <I name={name} w={name === 'order' || name === 'bulbLive' ? 24 : 20} h={name === 'order' ? 24 : 30} />
              </ToolButton>
            ))}
          </ToolGroup>
        ))}
        <ToolButton aria-label="Beta" $h={72}><I name="beta" w={22} h={34} /></ToolButton>
        <ToolButton aria-label="Help" $h={56}><I name="help" w={20} h={30} /></ToolButton>
      </RightBar>
    </Workspace>
  );
}

function WindowsBar() {
  return (
    <Taskbar>
      <StartButton aria-label="Start"><WinLogo /></StartButton>
      <SearchBox>
        <I name="search" w={18} h={25} sw={2} />
        <SearchInput aria-label="Search" placeholder="Type here to search" />
      </SearchBox>
      <Apps>
        <AppButton $open aria-label="Mail"><Mail /></AppButton>
        <AppButton><AppTile $edge="#f0a02c" $bg="#2a1500" $color="#f5a52e">Ai</AppTile></AppButton>
        <AppButton aria-label="Dolby"><Dolby /></AppButton>
        <AppButton><AppTile $edge="#e8ecee" $bg="#e8ecee" $color="#3a9fc4">Lc</AppTile></AppButton>
        <AppButton aria-label="Acrobat"><Acrobat /></AppButton>
        <AppButton aria-label="Remote desktop"><Monitor /></AppButton>
        <AppButton $open $active aria-label="Brave"><Lion w={20} h={36} /></AppButton>
        <AppButton aria-label="Brave Nightly">
          <Nightly>
            <Lion w={20} h={36} from="#7b3fb8" to="#5d2a9c" />
            <NightlyTag>nightly</NightlyTag>
          </Nightly>
        </AppButton>
      </Apps>
      <Tray>
        <Battery>100%</Battery>
        <Plug />
        <I name="chevronUp" w={14} h={16} sw={2} />
        <Power />
        <I name="speaker" w={15} h={18} sw={1.6} />
        <span>ENG</span>
        <Clock>
          6:45 PM
          <br />
          4/28/2020
        </Clock>
        <ActionButton aria-label="Notifications"><I name="note" w={18} h={26} sw={1.8} /></ActionButton>
      </Tray>
    </Taskbar>
  );
}

const App = () => {
  return (
    <Page>
      <GlobalStyle />
      <Browser />
      <ChartApp />
      <WindowsBar />
    </Page>
  );
};

export default App;
